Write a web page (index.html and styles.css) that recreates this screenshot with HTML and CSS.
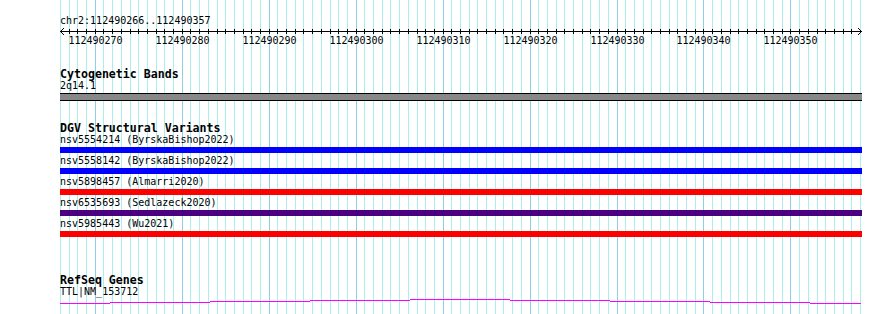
FILE: index.html
```html
<!DOCTYPE html>
<html lang="en">
<head>
    <meta charset="UTF-8">
    <meta name="viewport" content="width=device-width, initial-scale=1.0">
    <title>Genome Browser - chr2:112490266..112490357</title>
    <link rel="stylesheet" href="styles.css">
</head>
<body>
    <div class="browser">
        <div class="position">chr2:112490266..112490357</div>
        <svg class="ruler" width="802" height="20" viewBox="0 0 802 20">
            <defs>
                <pattern id="ticks" width="200" height="20" patternUnits="userSpaceOnUse">
                    <path d="M0 2h1v5h-1zM9 2h1v5h-1zM17 2h1v5h-1zM26 2h1v5h-1zM35 2h1v5h-1zM43 2h1v5h-1zM52 2h1v5h-1zM61 2h1v5h-1zM70 2h1v5h-1zM78 2h1v5h-1zM87 2h1v5h-1zM96 2h1v5h-1zM104 2h1v5h-1zM113 2h1v5h-1zM122 2h1v5h-1zM130 2h1v5h-1zM139 2h1v5h-1zM148 2h1v5h-1zM157 2h1v5h-1zM165 2h1v5h-1zM174 2h1v5h-1zM183 2h1v5h-1zM191 2h1v5h-1z"/>
                </pattern>
            </defs>
            <rect x="4" y="0" width="794" height="20" fill="url(#ticks)"/>
            <rect x="0" y="4" width="802" height="1"/>
            <!-- arrow heads -->
            <path d="M1 3h1v1h-1zM1 5h1v1h-1zM2 2h1v1h-1zM2 6h1v1h-1zM3 1h1v1h-1zM3 7h1v1h-1z"/>
            <path d="M800 3h1v1h-1zM800 5h1v1h-1zM799 2h1v1h-1zM799 6h1v1h-1zM798 1h1v1h-1zM798 7h1v1h-1z"/>
            <text x="35.5" y="17">112490270</text>
            <text x="122.5" y="17">112490280</text>
            <text x="209.5" y="17">112490290</text>
            <text x="296.5" y="17">112490300</text>
            <text x="383.5" y="17">112490310</text>
            <text x="470.5" y="17">112490320</text>
            <text x="557.5" y="17">112490330</text>
            <text x="643.5" y="17">112490340</text>
            <text x="730.5" y="17">112490350</text>
        </svg>

        <section class="track track-cyto">
            <div class="track-title">Cytogenetic Bands</div>
            <div class="feature-label">2q14.1</div>
            <div class="band"></div>
        </section>

        <section class="track track-dgv">
            <div class="track-title">DGV Structural Variants</div>
            <div class="variant">
                <div class="feature-label">nsv5554214 (ByrskaBishop2022)</div>
                <div class="variant-bar gain"></div>
            </div>
            <div class="variant">
                <div class="feature-label">nsv5558142 (ByrskaBishop2022)</div>
                <div class="variant-bar gain"></div>
            </div>
            <div class="variant">
                <div class="feature-label">nsv5898457 (Almarri2020)</div>
                <div class="variant-bar loss"></div>
            </div>
            <div class="variant">
                <div class="feature-label">nsv6535693 (Sedlazeck2020)</div>
                <div class="variant-bar complex"></div>
            </div>
            <div class="variant">
                <div class="feature-label">nsv5985443 (Wu2021)</div>
                <div class="variant-bar loss"></div>
            </div>
        </section>

        <section class="track track-refseq">
            <div class="track-title">RefSeq Genes</div>
            <div class="feature-label">TTL|NM_153712</div>
            <svg class="gene" width="802" height="5" viewBox="0 0 802 5">
                <path d="M0 4h50v1h-50zM50 3h100v1h-100zM150 2h100v1h-100zM250 1h100v1h-100zM350 0h100v1h-100zM450 1h100v1h-100zM550 2h100v1h-100zM650 3h100v1h-100zM750 4h51v1h-51z"/>
            </svg>
        </section>
    </div>
</body>
</html>
```

FILE: styles.css
```css
:root {
    --minor-line: #aaeeee;
    --major-line: #8ccfe8;
    --gain-color: #0000ff;
    --loss-color: #ff0000;
    --complex-color: #4b0082;
    --band-color: #888888;
    --gene-color: #ff00ff;
}

body {
    margin: 0;
    background: #ffffff;
    color: #000;
    font-family: "DejaVu Sans Mono", "Liberation Mono", monospace;
    font-size: 10px;
    line-height: 12px;
}

/* track area: one guide line per base, darker every 10 bases */
.browser {
    box-sizing: border-box;
    width: 802px;
    height: 314px;
    margin-left: 60px;
    padding-top: 15px;
    overflow: hidden;
    background-image:
        url("data:image/svg+xml,<svg xmlns='http://www.w3.org/2000/svg' width='802' height='1'><path fill='%238ccfe8' d='M35 0h1v1h-1zM122 0h1v1h-1zM209 0h1v1h-1zM296 0h1v1h-1zM383 0h1v1h-1zM470 0h1v1h-1zM557 0h1v1h-1zM643 0h1v1h-1zM730 0h1v1h-1z'/></svg>"),
        url("data:image/svg+xml,<svg xmlns='http://www.w3.org/2000/svg' width='200' height='1'><path fill='%23aaeeee' d='M0 0h1v1h-1zM9 0h1v1h-1zM17 0h1v1h-1zM26 0h1v1h-1zM35 0h1v1h-1zM43 0h1v1h-1zM52 0h1v1h-1zM61 0h1v1h-1zM70 0h1v1h-1zM78 0h1v1h-1zM87 0h1v1h-1zM96 0h1v1h-1zM104 0h1v1h-1zM113 0h1v1h-1zM122 0h1v1h-1zM130 0h1v1h-1zM139 0h1v1h-1zM148 0h1v1h-1zM157 0h1v1h-1zM165 0h1v1h-1zM174 0h1v1h-1zM183 0h1v1h-1zM191 0h1v1h-1z'/></svg>");
    background-repeat: repeat-y, repeat;
    background-size: 802px 1px, 200px 1px;
    background-position: 0 0, 0 0;
}

.position {
    white-space: nowrap;
}

.ruler {
    display: block;
    shape-rendering: crispEdges;
}

.ruler text {
    font-family: "DejaVu Sans Mono", "Liberation Mono", monospace;
    font-size: 10px;
    text-anchor: middle;
}

.track-title {
    font-weight: bold;
    font-size: 11.6px;
    white-space: nowrap;
}

.feature-label {
    white-space: nowrap;
}

.track-cyto {
    margin-top: 21px;
}

.band {
    margin-top: 1px;
    height: 6px;
    border-top: 1px solid #000;
    border-bottom: 1px solid #000;
    background: var(--band-color);
}

.track-dgv {
    margin-top: 21px;
}

.variant + .variant {
    margin-top: 2px;
}

.variant-bar {
    margin-top: 1px;
    height: 6px;
}

.variant-bar.gain {
    background: var(--gain-color);
}

.variant-bar.loss {
    background: var(--loss-color);
}

.variant-bar.complex {
    background: var(--complex-color);
}

.track-refseq {
    margin-top: 37px;
}

.gene {
    display: block;
    margin-top: 1px;
    fill: var(--gene-color);
    shape-rendering: crispEdges;
}
```
